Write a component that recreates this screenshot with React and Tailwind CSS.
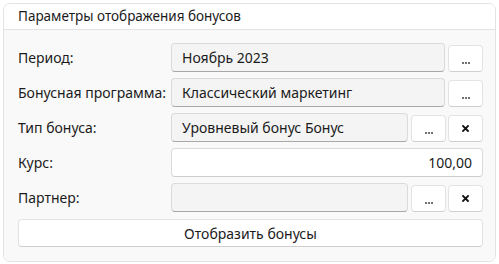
import React from "react";

const font = { fontFamily: '"Noto Sans", "Open Sans", sans-serif' };

function Dots() {
  return (
    <button className="ml-[3px] flex h-[27px] w-[35px] shrink-0 items-end justify-center gap-[1px] rounded-[4px] border border-[#e3e3e3] border-b-[#cfcfcf] bg-white pb-[7px]">
      <span className="h-[2px] w-[2px] bg-[#707070]" />
      <span className="h-[2px] w-[2px] bg-[#707070]" />
      <span className="h-[2px] w-[2px] bg-[#707070]" />
    </button>
  );
}

function Clear() {
  return (
    <button className="ml-[2px] flex h-[27px] w-[35px] shrink-0 items-center justify-center rounded-[4px] border border-[#e3e3e3] border-b-[#cfcfcf] bg-white">
      <svg width="7" height="7" viewBox="0 0 7 7">
        <path d="M1 1 L6 6 M6 1 L1 6" stroke="#111" strokeWidth="1.8" strokeLinecap="square" />
      </svg>
    </button>
  );
}

function Field({ value, white, right }) {
  return (
    <div
      className={`flex h-[29px] min-w-0 flex-1 items-center rounded-[4px] border border-[#dadada] px-[10px] text-[14px] text-[#1b1b1b] ${
        white ? "bg-white border-b-[#cdcdcd]" : "bg-[#f4f4f4] border-b-[#a8a8a8]"
      } ${right ? "justify-end" : ""}`}
    >
      {value}
    </div>
  );
}

function Row({ label, children }) {
  return (
    <div className="flex h-[29px] items-end">
      <div className="flex h-[29px] w-[153px] shrink-0 items-center text-[14px] text-[#1b1b1b]">{label}</div>
      {children}
    </div>
  );
}

export default function App() {
  return (
    <div className="h-[264px] w-[499px] bg-white p-[3px]" style={font}>
      <div className="flex h-[259px] w-[493px] flex-col overflow-hidden rounded-[7px] border border-[#e3e3e3]">
        <div className="flex h-[26px] shrink-0 items-center border-b border-[#e3e3e3] bg-white px-[14px] text-[13.5px] text-[#1b1b1b]">
          Параметры отображения бонусов
        </div>
        <div className="flex flex-1 flex-col gap-[6px] bg-[#f9f9f9] pl-[14px] pr-[12px] pt-[13px]">
          <Row label="Период:">
            <Field value="Ноябрь 2023" />
            <Dots />
          </Row>
          <Row label="Бонусная программа:">
            <Field value="Классический маркетинг" />
            <Dots />
          </Row>
          <Row label="Тип бонуса:">
            <Field value="Уровневый бонус Бонус" />
            <Dots />
            <Clear />
          </Row>
          <Row label="Курс:">
            <Field value="100,00" white right />
          </Row>
          <Row label="Партнер:">
            <Field value="" />
            <Dots />
            <Clear />
          </Row>
          <button className="mt-[1px] flex h-[28px] items-center justify-center rounded-[4px] border border-[#e3e3e3] border-b-[#cfcfcf] bg-white text-[14px] text-[#1b1b1b]">
            Отобразить бонусы
          </button>
        </div>
      </div>
    </div>
  );
}
